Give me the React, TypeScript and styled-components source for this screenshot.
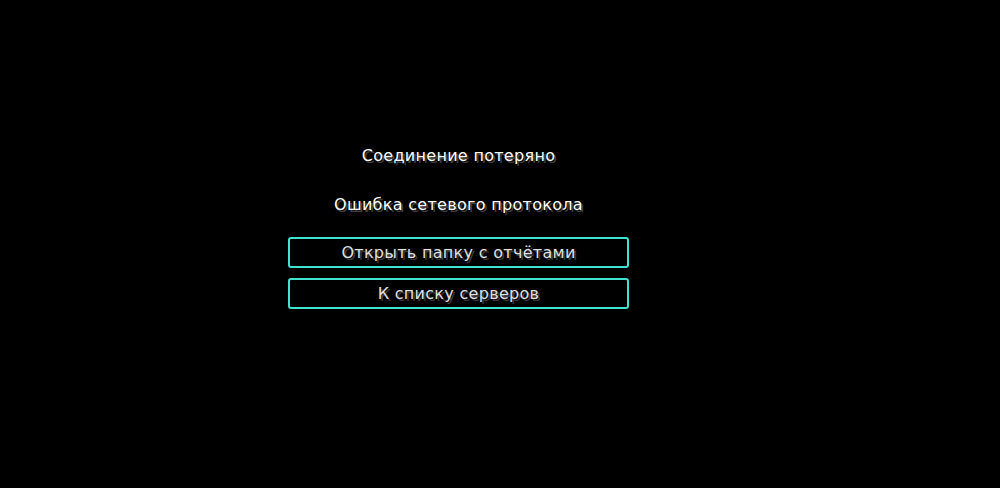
import React from "react";
import styled, { createGlobalStyle } from "styled-components";

const GlobalStyle = createGlobalStyle`
  html, body {
    margin: 0;
    padding: 0;
    background: #000;
  }
  #root {
    height: 488px;
  }
`;

// whole screen, content column sits a bit left of centre like the game does
const Screen = styled.div`
  height: 488px;
  display: flex;
  justify-content: center;
  padding-right: 83px;
  background: #000;
  font-family: "DejaVu Sans", "Noto Sans", sans-serif;
  font-size: 16px;
  -webkit-font-smoothing: none;
`;

const Column = styled.div`
  width: 341px;
  padding-top: 146px;
  display: flex;
  flex-direction: column;
  align-items: center;
`;

const Label = styled.div<{ $gap: number }>`
  height: 20px;
  line-height: 20px;
  margin-bottom: ${(p) => p.$gap}px;
  color: #ffffff;
  text-shadow: 2px 2px 0 #3f3f3f;
  letter-spacing: 0.3px;
  white-space: nowrap;
`;

const Buttons = styled.div`
  width: 100%;
  display: flex;
  flex-direction: column;
  gap: 10px;
`;

const MenuButton = styled.button`
  box-sizing: border-box;
  width: 100%;
  height: 31px;
  padding: 0;
  background: #000;
  border: 2px solid #3fe3cf;
  border-radius: 3px;
  color: #e0e0e0;
  font: inherit;
  line-height: 27px;
  letter-spacing: 0.3px;
  text-shadow: 2px 2px 0 #383838;
  cursor: pointer;
`;

export default function App() {
  return (
    <>
      <GlobalStyle />
      <Screen>
        <Column>
          <Label $gap={29}>Соединение потеряно</Label>
          <Label $gap={22}>Ошибка сетевого протокола</Label>
          <Buttons>
            <MenuButton>Открыть папку с отчётами</MenuButton>
            <MenuButton>К списку серверов</MenuButton>
          </Buttons>
        </Column>
      </Screen>
    </>
  );
}
